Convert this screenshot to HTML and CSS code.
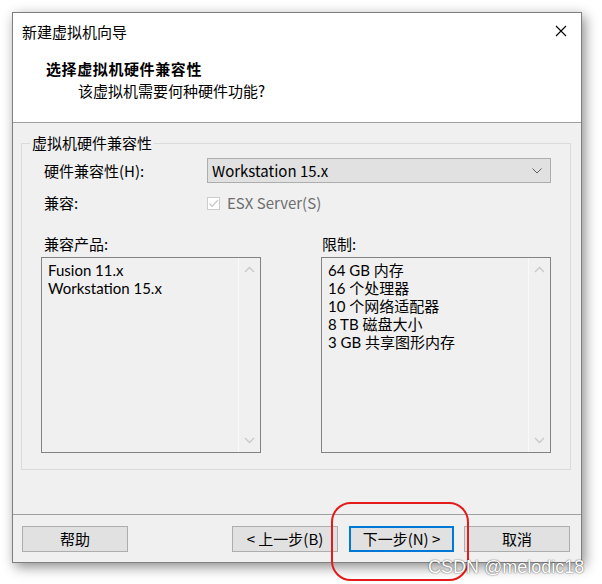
FILE: index.html
```html
<!DOCTYPE html>
<html lang="zh-CN">
<head>
<meta charset="utf-8">
<link rel="stylesheet" href="styles.css">
</head>
<body>
<div class="stage">
  <div class="window">
    <div class="top">
      <div class="titlebar">
        <span class="title">新建虚拟机向导</span>
        <svg class="close" width="12" height="12" viewBox="0 0 12 12"><path d="M1 1 L11 11 M11 1 L1 11" stroke="#000" stroke-width="1.1" fill="none"/></svg>
      </div>
      <div class="heading">选择虚拟机硬件兼容性</div>
      <div class="subheading">该虚拟机需要何种硬件功能?</div>
    </div>
    <div class="content">
      <div class="group">
        <span class="legend">虚拟机硬件兼容性</span>
        <div class="row row-select">
          <span class="label">硬件兼容性(H):</span>
          <div class="select">
            <span>Workstation 15.x</span>
            <svg width="10" height="6" viewBox="0 0 10 6"><path d="M0.5 0.5 L5 5 L9.5 0.5" stroke="#606060" stroke-width="1" fill="none"/></svg>
          </div>
        </div>
        <div class="row row-check">
          <span class="label">兼容:</span>
          <span class="checkbox"><svg width="11" height="11" viewBox="0 0 11 11"><path d="M1.5 5.5 L4.2 8.3 L9.8 2.2" stroke="#c3c3c3" stroke-width="1.2" fill="none"/></svg></span>
          <span class="disabled">ESX Server(S)</span>
        </div>
        <div class="lists">
          <div class="col">
            <span class="label">兼容产品:</span>
            <div class="listbox">
              <div class="items">
                <div>Fusion 11.x</div>
                <div>Workstation 15.x</div>
              </div>
              <div class="scroll">
                <svg width="11" height="7" viewBox="0 0 11 7"><path d="M1 6 L5.5 1.5 L10 6" stroke="#c8c8c8" stroke-width="1.3" fill="none"/></svg>
                <svg width="11" height="7" viewBox="0 0 11 7"><path d="M1 1 L5.5 5.5 L10 1" stroke="#c8c8c8" stroke-width="1.3" fill="none"/></svg>
              </div>
            </div>
          </div>
          <div class="col">
            <span class="label">限制:</span>
            <div class="listbox">
              <div class="items">
                <div>64 GB 内存</div>
                <div>16 个处理器</div>
                <div>10 个网络适配器</div>
                <div>8 TB 磁盘大小</div>
                <div>3 GB 共享图形内存</div>
              </div>
              <div class="scroll">
                <svg width="11" height="7" viewBox="0 0 11 7"><path d="M1 6 L5.5 1.5 L10 6" stroke="#c8c8c8" stroke-width="1.3" fill="none"/></svg>
                <svg width="11" height="7" viewBox="0 0 11 7"><path d="M1 1 L5.5 5.5 L10 1" stroke="#c8c8c8" stroke-width="1.3" fill="none"/></svg>
              </div>
            </div>
          </div>
        </div>
      </div>
    </div>
    <div class="footer">
      <button class="btn">帮助</button>
      <div class="spacer"></div>
      <button class="btn">&lt; 上一步(B)</button>
      <button class="btn default">下一步(N) &gt;</button>
      <button class="btn">取消</button>
    </div>
  </div>
  <div class="highlight"></div>
  <div class="watermark">CSDN @melodic18</div>
</div>
</body>
</html>
```

FILE: styles.css
```css
* { box-sizing: border-box; }
html, body { margin: 0; padding: 0; background: #fff; }
body {
  font-family: "Noto Sans CJK SC", "Noto Sans", sans-serif;
  font-size: 15px;
  color: #000;
}
.stage {
  position: relative;
  width: 602px;
  height: 584px;
  padding: 12px 0 0 12px;
  overflow: hidden;
}
.window {
  width: 570px;
  height: 551px;
  border: 1px solid #7f7f7f;
  background: #f0f0f0;
  display: flex;
  flex-direction: column;
  box-shadow: 3px 4px 12px rgba(0,0,0,0.45);
}
.top {
  background: #fff;
  height: 110px;
  border-bottom: 1px solid #a0a0a0;
  flex: none;
}
.titlebar {
  height: 38px;
  display: flex;
  align-items: center;
  justify-content: space-between;
  padding: 0 14px 0 9px;
}
.title { line-height: 20px; }
.close { display: block; margin-top: -2px; }
.heading {
  font-weight: bold;
  line-height: 20px;
  margin: 8px 0 0 33px;
  letter-spacing: 0.6px;
}
.subheading {
  line-height: 20px;
  margin: 2px 0 0 65px;
}
.content {
  flex: 1;
  padding: 20px 10px 0 8px;
}
.group {
  position: relative;
  border: 1px solid #dadada;
  height: 327px;
  padding: 14px 0 0 19px;
}
.legend {
  position: absolute;
  left: 8px;
  top: -11px;
  padding: 0 2px;
  background: #f0f0f0;
  line-height: 20px;
}
.row { display: flex; align-items: center; }
.row .label { width: 166px; padding-left: 3px; line-height: 20px; }
.row-select { height: 25px; }
.select {
  width: 344px;
  height: 25px;
  background: #e1e1e1;
  border: 1px solid #adadad;
  display: flex;
  align-items: center;
  justify-content: space-between;
  padding: 0 8px 0 4px;
}
.row-check { height: 20px; margin-top: 10px; }
.checkbox {
  width: 13px;
  height: 13px;
  border: 1px solid #cccccc;
  background: #fff;
  display: flex;
  align-items: center;
  justify-content: center;
  margin-right: 7px;
}
.checkbox svg { display: block; }
.disabled { color: #6d6d6d; line-height: 20px; }
.lists {
  display: grid;
  grid-template-columns: 220px 230px;
  column-gap: 60px;
  margin-top: 21px;
}
.col { display: flex; flex-direction: column; }
.col .label { line-height: 20px; padding-left: 3px; }
.col:nth-child(2) .label { padding-left: 1px; }
.listbox {
  margin-top: 3px;
  height: 196px;
  border: 1px solid #828282;
  background: #f0f0f0;
  display: flex;
}
.items {
  flex: 1;
  padding: 3px 0 0 6px;
  font-family: "Lato", "Noto Sans CJK SC", sans-serif;
  font-size: 15px;
  line-height: 18px;
}
.scroll {
  width: 22px;
  border-left: 1px solid #f9f9f9;
  display: flex;
  flex-direction: column;
  justify-content: space-between;
  align-items: center;
  padding: 8px 0 8px;
}
.scroll svg { display: block; }
.footer {
  flex: none;
  height: 48px;
  border-top: 1px solid #a0a0a0;
  display: flex;
  align-items: flex-start;
  padding: 11px 11px 0 9px;
}
.spacer { flex: 1; }
.btn {
  font: inherit;
  color: #000;
  width: 106px;
  height: 26px;
  background: #e1e1e1;
  border: 1px solid #adadad;
  padding: 0;
  line-height: 22px;
}
.btn + .btn { margin-left: 11px; }
.btn.default { border: 2px solid #0078d7; width: 105px; }
.btn.default + .btn { margin-left: 10px; }
.highlight {
  position: absolute;
  left: 331px;
  top: 502px;
  width: 138px;
  height: 79px;
  border: 2px solid #e21b1b;
  border-radius: 20px;
}
.watermark {
  position: absolute;
  left: 428px;
  top: 556px;
  font-family: "Liberation Sans", Arial, sans-serif;
  font-size: 18px;
  line-height: 22px;
  color: #fff;
  text-shadow: 0 0 1px rgba(0,0,0,0.6), 0 0 2px rgba(0,0,0,0.35);
}
```
